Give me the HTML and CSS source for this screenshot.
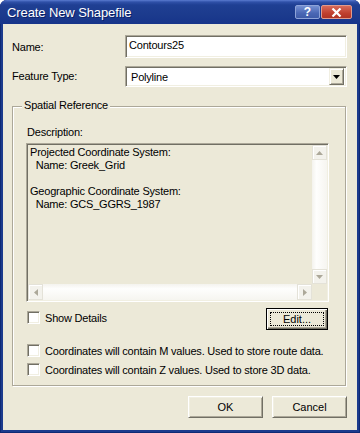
FILE: index.html
```html
<!DOCTYPE html>
<html lang="en">
<head>
    <meta charset="UTF-8">
    <title>Create New Shapefile</title>
    <link rel="stylesheet" href="styles.css">
</head>
<body>
    <div class="window">
        <div class="titlebar">
            <span class="title">Create New Shapefile</span>
            <div class="caption-btns">
                <span class="cap-btn help">?</span>
                <span class="cap-btn close">
                    <svg width="11" height="9" viewBox="0 0 11 9"><path d="M1.5 0.5 L9.5 8.5 M9.5 0.5 L1.5 8.5" stroke="#fff" stroke-width="2.2" fill="none"/></svg>
                </span>
            </div>
        </div>

        <div class="client">
            <div class="fields">
                <label class="field-label first">Name:</label>
                <div class="textbox">Contours25</div>
                <label class="field-label">Feature Type:</label>
                <div class="combo">
                    <span class="combo-value">Polyline</span>
                    <span class="drop-btn">
                        <svg width="7" height="4" viewBox="0 0 7 4"><path d="M0 0 H7 L3.5 4 Z" fill="#000"/></svg>
                    </span>
                </div>
            </div>

            <div class="group">
                <span class="group-title">Spatial Reference</span>
                <div class="desc-label">Description:</div>
                <div class="desc-box">
                    <div class="desc-text">Projected Coordinate System:
  Name: Greek_Grid

Geographic Coordinate System:
  Name: GCS_GGRS_1987</div>
                    <div class="vscroll">
                        <span class="sb-btn"><svg width="7" height="4" viewBox="0 0 7 4"><path d="M0 4 H7 L3.5 0 Z" fill="#aca899"/></svg></span>
                        <span class="sb-track v"></span>
                        <span class="sb-btn"><svg width="7" height="4" viewBox="0 0 7 4"><path d="M0 0 H7 L3.5 4 Z" fill="#aca899"/></svg></span>
                    </div>
                    <div class="hscroll">
                        <span class="sb-btn"><svg width="4" height="7" viewBox="0 0 4 7"><path d="M4 0 V7 L0 3.5 Z" fill="#aca899"/></svg></span>
                        <span class="sb-track h"></span>
                        <span class="sb-btn"><svg width="4" height="7" viewBox="0 0 4 7"><path d="M0 0 V7 L4 3.5 Z" fill="#aca899"/></svg></span>
                    </div>
                    <div class="corner"></div>
                </div>

                <div class="details-row">
                    <label class="check show"><span class="box"></span>Show Details</label>
                    <span class="button default"><span class="focus">Edit...</span></span>
                </div>

                <label class="check m-row"><span class="box"></span>Coordinates will contain M values. Used to store route data.</label>
                <label class="check z-row"><span class="box"></span>Coordinates will contain Z values. Used to store 3D data.</label>
            </div>

            <div class="actions">
                <span class="button">OK</span>
                <span class="button">Cancel</span>
            </div>
        </div>
    </div>
</body>
</html>
```

FILE: styles.css
```css
* {
    margin: 0;
    padding: 0;
    box-sizing: border-box;
}

body {
    background: #fff;
    font-family: "Liberation Sans", Arial, sans-serif;
    font-size: 11px;
    letter-spacing: -0.2px;
    color: #000;
}

.window {
    width: 360px;
    height: 433px;
    padding: 0 3px 3px;
    background: #1c3b8d;
    border-radius: 7px 7px 0 0;
    box-shadow: inset 1px 0 0 #0f2a74, inset -1px 0 0 #0f2a74, inset 0 -1px 0 #0f2a74;
    display: flex;
    flex-direction: column;
}

/* title bar */
.titlebar {
    height: 24px;
    margin: 0 -3px;
    padding: 0 8px 0 7px;
    display: flex;
    justify-content: space-between;
    border-radius: 7px 7px 0 0;
    background: linear-gradient(#5a7bd0 0, #2f50a8 2px, #1f3f93 5px, #1c3b8d 60%, #17348a 100%);
    color: #fff;
}

.title {
    font-size: 13px;
    letter-spacing: -0.1px;
    line-height: 25px;
    text-shadow: 1px 1px 0 #0c2166;
}

.caption-btns {
    display: flex;
    gap: 1px;
    margin-top: 5px;
}

.cap-btn {
    height: 14px;
    display: flex;
    align-items: center;
    justify-content: center;
    border: 1px solid #8ea3d8;
    border-radius: 2px;
    color: #fff;
}

.help {
    width: 25px;
    background: linear-gradient(#7590d2, #4a67b5 60%, #3f5ca9);
    font-weight: bold;
    font-size: 12px;
    letter-spacing: 0;
}

.close {
    width: 31px;
    border-color: #e09a8c;
    background: linear-gradient(#d76a5a, #c0402f 60%, #b03424);
}

/* client area */
.client {
    flex: 1;
    background: #ece9d8;
    display: flex;
    flex-direction: column;
}

.fields {
    display: grid;
    grid-template-columns: 113px 222px;
    grid-template-rows: 23px 21px;
    row-gap: 8px;
    margin: 11px 0 0 9px;
}

.field-label {
    line-height: 21px;
}

.field-label.first {
    line-height: 23px;
    padding-top: 1px;
}

.textbox,
.combo {
    background: #fff;
    border: 1px solid;
    border-color: #aca899 #fff #fff #aca899;
    box-shadow: inset 1px 1px 0 #716f64, inset -1px -1px 0 #f1efe2;
}

.textbox {
    padding: 1px 3px;
    line-height: 17px;
}

.combo {
    display: flex;
    justify-content: space-between;
    padding: 1px 2px 1px 1px;
}

.combo-value {
    padding: 1px 0 0 4px;
    line-height: 17px;
}

.drop-btn {
    width: 15px;
    display: flex;
    align-items: center;
    justify-content: center;
    background: #ece9d8;
    border: 1px solid;
    border-color: #f1efe2 #716f64 #716f64 #f1efe2;
    box-shadow: inset 1px 1px 0 #fff, inset -1px -1px 0 #aca899;
}

/* group box */
.group {
    position: relative;
    width: 334px;
    height: 280px;
    margin: 19px 0 0 9px;
    padding: 19px 0 0 13px;
    border: 1px solid #aca899;
    box-shadow: inset 1px 1px 0 #fff, 1px 1px 0 #fff;
}

.group-title {
    position: absolute;
    left: 9px;
    top: -8px;
    padding: 0 2px;
    line-height: 13px;
    background: #ece9d8;
}

.desc-label {
    line-height: 13px;
    padding-left: 1px;
    margin-bottom: 4px;
}

.desc-box {
    width: 303px;
    height: 159px;
    border: 1px solid;
    border-color: #aca899 #fff #fff #aca899;
    box-shadow: inset 1px 1px 0 #716f64, inset -1px -1px 0 #f1efe2;
    padding: 1px;
    display: grid;
    grid-template-columns: 284px 15px;
    grid-template-rows: 139px 16px;
}

.desc-text {
    white-space: pre;
    line-height: 13px;
    padding: 1px 0 0 2px;
    overflow: hidden;
}

.vscroll {
    display: flex;
    flex-direction: column;
}

.hscroll {
    display: flex;
}

.sb-btn {
    width: 15px;
    height: 15px;
    flex: none;
    display: flex;
    align-items: center;
    justify-content: center;
    background: #f3f2ec;
    border: 1px solid #e4e2d8;
    box-shadow: inset 1px 1px 0 #fff;
}

.hscroll .sb-btn {
    height: 16px;
}

.sb-track {
    flex: 1;
}

.sb-track.v {
    background: linear-gradient(to right, #f4f3ee, #fefefd 30%, #f6f5f0);
}

.sb-track.h {
    background: linear-gradient(#f4f3ee, #fefefd 30%, #f6f5f0);
}

.corner {
    background: #ece9d8;
}

/* checkboxes and buttons */
.check {
    display: flex;
    align-items: center;
    gap: 5px;
    height: 13px;
    margin-left: 1px;
}

.box {
    width: 13px;
    height: 13px;
    flex: none;
    background: #fff;
    border: 1px solid;
    border-color: #aca899 #fff #fff #aca899;
    box-shadow: inset 1px 1px 0 #716f64, inset -1px -1px 0 #f1efe2;
}

.details-row {
    width: 302px;
    height: 22px;
    margin-top: 6px;
    display: flex;
    justify-content: space-between;
    align-items: flex-start;
}

.check.show {
    margin-top: 3px;
}

.m-row {
    margin-top: 14px;
}

.z-row {
    margin-top: 6px;
}

.button {
    width: 75px;
    height: 22px;
    display: flex;
    align-items: center;
    justify-content: center;
    background: #ece9d8;
    border: 1px solid;
    border-color: #fff #716f64 #716f64 #fff;
    box-shadow: inset 1px 1px 0 #f1efe2, inset -1px -1px 0 #aca899;
    letter-spacing: 0;
}

.button.default {
    width: 62px;
    border: 1px solid #000;
    box-shadow: inset 1px 1px 0 #fff, inset -1px -1px 0 #716f64, inset -2px -2px 0 #aca899;
    padding: 3px;
}

.focus {
    flex: 1;
    align-self: stretch;
    display: flex;
    align-items: center;
    justify-content: center;
    border: 1px dotted #000;
}

.actions {
    display: flex;
    justify-content: flex-end;
    gap: 9px;
    margin-top: 10px;
    padding-right: 10px;
}
```
